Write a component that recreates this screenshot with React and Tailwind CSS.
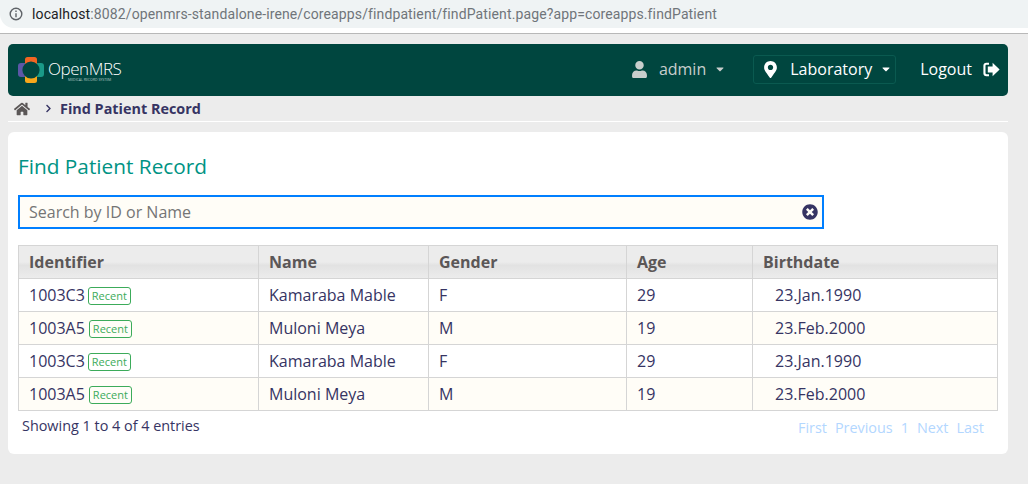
import { FaHome, FaUser, FaMapMarkerAlt, FaTimesCircle, FaChevronRight, FaCaretDown } from 'react-icons/fa';

const rows = [
  { id: '1003C3', name: 'Kamaraba Mable', gender: 'F', age: '29', birth: '23.Jan.1990' },
  { id: '1003A5', name: 'Muloni Meya', gender: 'M', age: '19', birth: '23.Feb.2000' },
  { id: '1003C3', name: 'Kamaraba Mable', gender: 'F', age: '29', birth: '23.Jan.1990' },
  { id: '1003A5', name: 'Muloni Meya', gender: 'M', age: '19', birth: '23.Feb.2000' },
];

const headers = ['Identifier', 'Name', 'Gender', 'Age', 'Birthdate'];
const colClass = 'grid grid-cols-[239px_170px_198px_126px_1fr]';

function Logo() {
  return (
    <svg width="26" height="26" viewBox="0 0 26 26">
      <path d="M7 2.5 Q7 0 9.5 0 H16.5 Q19 0 19 2.5 V7 H7 Z" fill="#f26522" />
      <path d="M7 23.5 Q7 26 9.5 26 H16.5 Q19 26 19 23.5 V19 H7 Z" fill="#f8a81b" />
      <path d="M7 6 H3 Q0 6 0 9 V17 Q0 20 3 20 H7 Z" fill="#5b57a6" />
      <path d="M19 6 H23 Q26 6 26 9 V17 Q26 20 23 20 H19 Z" fill="#1a9a88" />
      <circle cx="13" cy="13" r="8.6" fill="#00463f" />
    </svg>
  );
}

function LogoutIcon() {
  return (
    <svg width="17" height="15" viewBox="0 0 17 15" fill="white">
      <path d="M6 .8H3.4C1.5.8.4 2 .4 3.6v7.8c0 1.6 1.1 2.8 3 2.8H6v-2H3.6c-.7 0-1.1-.4-1.1-1.1V3.9c0-.7.4-1.1 1.1-1.1H6z" />
      <path d="M9.6.8 L16.6 7.5 L9.6 14.2 V10.6 H4.8 V4.4 H9.6 Z" />
    </svg>
  );
}

export default function App() {
  return (
    <div className="h-[484px] w-[1028px] overflow-hidden bg-[#ececec] font-['Open_Sans',sans-serif] text-[#363463]">
      {/* Browser bar */}
      <div className="flex h-[34px] items-start border-b border-[#b8b8b8] bg-white">
        <div className="flex h-[28px] w-full items-center rounded-bl-[14px] bg-[#eff3f4] pl-[9px]">
          <svg width="14" height="14" viewBox="0 0 14 14" fill="none" stroke="#5f6368" strokeWidth="1.4">
            <circle cx="7" cy="7" r="5.8" />
            <path d="M7 6.2v4M7 3.6v1.5" />
          </svg>
          <span className="ml-[9px] whitespace-nowrap font-['Roboto',sans-serif] text-[14px] tracking-[0.12px] text-[#70757a]">
            <span className="text-[#202124]">localhost</span>:8082/openmrs-standalone-irene/coreapps/findpatient/findPatient.page?app=coreapps.findPatient
          </span>
        </div>
      </div>

      <div className="mt-[10px] px-2">
        {/* Header */}
        <div className="flex h-[52px] w-[1000px] items-center rounded-[5px] bg-[#00463f] pl-[10px] pr-[8px]">
          <Logo />
          <div className="ml-[4px] flex flex-col items-start pt-[2px]">
            <span className="text-[17px] font-light leading-[17px] tracking-[-0.45px] text-white">OpenMRS</span>
            <span className="ml-[20px] mt-[1px] whitespace-nowrap text-[3.5px] leading-[4px] text-[#b5c8c5]">MEDICAL RECORD SYSTEM</span>
          </div>

          <div className="ml-auto flex items-center pb-[2px] text-[16px]">
            <FaUser className="h-[17px] w-[15px] text-[#c8cecc]" />
            <span className="ml-[12px] text-[#c8cecc]">admin</span>
            <FaCaretDown className="ml-[8px] h-[12px] w-[12px] text-[#c8cecc]" />
            <div className="ml-[27px] flex h-[29px] items-center rounded-[3px] border border-[#0a5a50] pl-[10px] pr-[3px] text-white">
              <FaMapMarkerAlt className="h-[17px] w-[13px]" />
              <span className="ml-[13px]">Laboratory</span>
              <FaCaretDown className="ml-[8px] h-[12px] w-[12px]" />
            </div>
            <span className="ml-[24px] text-white">Logout</span>
            <span className="ml-[11px] flex"><LogoutIcon /></span>
          </div>
        </div>

        {/* Breadcrumb */}
        <div className="flex h-[26px] w-[1000px] items-center border-b border-white pl-[6px]">
          <FaHome className="h-4 w-4 text-[#5b5757]" />
          <FaChevronRight className="ml-[14px] h-[9px] w-[9px] text-[#363463]" />
          <span className="ml-[7px] text-[14.4px] font-bold">Find Patient Record</span>
        </div>

        {/* Card */}
        <div className="mt-[10px] h-[322px] w-[1000px] rounded-[6px] bg-white px-[10px] pt-[19px]">
          <h2 className="text-[20.8px] leading-[30px] text-[#009384]">Find Patient Record</h2>

          <div className="mt-[14px] flex h-[34px] w-[806px] items-center border-2 border-[#007fff] bg-[#fffdf7] pl-[9px] pr-[4px]">
            <span className="text-[16px] text-[#757575]">Search by ID or Name</span>
            <FaTimesCircle className="ml-auto h-4 w-4 text-[#363463]" />
          </div>

          <div className="mt-[16px] w-[980px] border border-b-0 border-[#d5d5d5]">
            <div className={`${colClass} h-[33px] border-b border-[#d5d5d5] bg-[linear-gradient(#ececec_50%,#e2e2e2_60%,#ececec)] text-[16px] font-bold text-[#5b5757]`}>
              {headers.map((h, i) => (
                <div key={h} className={`flex items-center pl-[10px] ${i > 0 ? 'border-l border-[#d5d5d5]' : ''}`}>{h}</div>
              ))}
            </div>
            {rows.map((r, i) => (
              <div key={i} className={`${colClass} h-[33px] border-b border-[#d5d5d5] text-[16px] ${i % 2 ? 'bg-[#fffdf7]' : 'bg-white'}`}>
                <div className="flex items-center pl-[10px]">
                  {r.id}
                  <span className={`mt-[2px] rounded-[3px] border border-[#3cab5a] px-[3px] text-[11px] leading-[16px] text-[#3cab5a] ${i % 2 ? 'ml-[4px]' : 'ml-[3px]'}`}>Recent</span>
                </div>
                <div className="flex items-center border-l border-[#d5d5d5] pl-[10px]">{r.name}</div>
                <div className="flex items-center border-l border-[#d5d5d5] pl-[10px]">{r.gender}</div>
                <div className="flex items-center border-l border-[#d5d5d5] pl-[10px]">{r.age}</div>
                <div className="flex items-center border-l border-[#d5d5d5] pl-[22px]">{r.birth}</div>
              </div>
            ))}
          </div>

          <div className="flex w-[980px] items-start justify-between">
            <span className="ml-[4px] mt-[4px] text-[14.4px] leading-[22px]">Showing 1 to 4 of 4 entries</span>
            <div className="mr-[14px] mt-[6px] flex gap-[8px] text-[14.4px] leading-[22px] text-[#b3d7ff]">
              <span>First</span>
              <span>Previous</span>
              <span>1</span>
              <span>Next</span>
              <span>Last</span>
            </div>
          </div>
        </div>
      </div>
    </div>
  );
}
